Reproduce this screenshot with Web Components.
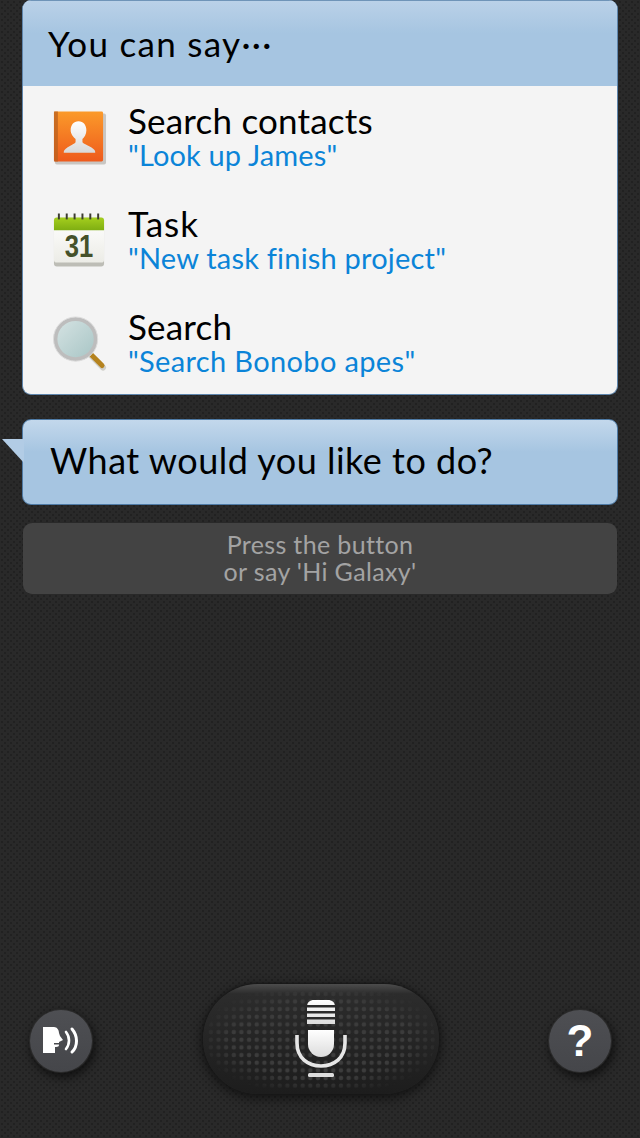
<!DOCTYPE html>
<html>
<head>
<meta charset="utf-8">
<style>
  html, body { margin: 0; padding: 0; }
  body { background: #262626; font-family: Lato, "Noto Sans", sans-serif; }
</style>
</head>
<body>
<voice-screen>
  <say-card heading="You can say···">
    <say-row label="Search contacts" example="&quot;Look up James&quot;" ls="0.2" els="0.15">
      <svg slot="icon" width="56" height="56" viewBox="0 0 56 56" style="margin-top:-4px">
        <defs>
          <linearGradient id="book" x1="0" y1="0" x2="0" y2="1"><stop offset="0" stop-color="#fb9a2a"/><stop offset="1" stop-color="#ee5a1c"/></linearGradient>
          <linearGradient id="person" x1="0" y1="0" x2="0" y2="1"><stop offset="0" stop-color="#fff"/><stop offset="1" stop-color="#d9d9d9"/></linearGradient>
        </defs>
        <rect x="3" y="4" width="52" height="52" rx="2" fill="#c9c6c2"/>
        <rect x="2" y="2" width="50" height="51" rx="1.5" fill="url(#book)"/>
        <rect x="2" y="2" width="4" height="51" fill="#b9601f" opacity=".75"/>
        <path d="M27 12c5 0 8 4 8 9 0 4-2 7-4 9v3c0 2 9 4 12 8 1 1 1 2 1 3H12c0-1 0-2 1-3 3-4 11-6 11-8v-3c-2-2-5-5-5-9 0-5 3-9 8-9z" fill="url(#person)"/>
      </svg>
    </say-row>
    <say-row label="Task" example="&quot;New task finish project&quot;" ls="1" els="0.2">
      <svg slot="icon" width="56" height="60" viewBox="0 0 56 60" style="margin-top:-2px">
        <defs>
          <linearGradient id="leaf" x1="0" y1="0" x2="0" y2="1"><stop offset="0" stop-color="#a5cf1e"/><stop offset="1" stop-color="#7fae12"/></linearGradient>
          <linearGradient id="sheet" x1="0" y1="0" x2="0" y2="1"><stop offset="0" stop-color="#fff"/><stop offset="1" stop-color="#ecece6"/></linearGradient>
        </defs>
        <rect x="2" y="6" width="51" height="50" rx="3" fill="#bdbdb6"/>
        <rect x="2" y="6" width="51" height="46" rx="3" fill="url(#sheet)"/>
        <path d="M2 19V9a3 3 0 0 1 3-3h45a3 3 0 0 1 3 3v10z" fill="url(#leaf)"/>
        <g fill="#3c3c30">
          <rect x="6" y="2" width="2" height="6"/><rect x="14" y="2" width="2" height="6"/><rect x="22" y="2" width="2" height="6"/>
          <rect x="30" y="2" width="2" height="6"/><rect x="38" y="2" width="2" height="6"/><rect x="46" y="2" width="2" height="6"/>
        </g>
        <text x="13" y="46" textLength="29" lengthAdjust="spacingAndGlyphs" font-family="Liberation Sans, sans-serif" font-weight="700" font-size="31" fill="#45512a">31</text>
      </svg>
    </say-row>
    <say-row label="Search" example="&quot;Search Bonobo apes&quot;" ls="0.2" els="0.35">
      <svg slot="icon" width="56" height="56" viewBox="0 0 56 56" style="margin-top:-4px">
        <defs>
          <linearGradient id="glass" x1="0" y1="0" x2="1" y2="1"><stop offset="0" stop-color="#d4e2e2"/><stop offset="1" stop-color="#a9c6c6"/></linearGradient>
        </defs>
        <path d="M40 41l12 12" stroke="#9a9a8c" stroke-width="6" stroke-linecap="round" opacity=".4"/>
        <path d="M40 40l11 11" stroke="#b5831f" stroke-width="5" stroke-linecap="round"/>
        <circle cx="24" cy="24" r="22.5" fill="#bdbdbd"/>
        <circle cx="24" cy="24" r="22.5" fill="none" stroke="#dcdcdc" stroke-width="1"/>
        <circle cx="24" cy="24" r="18.5" fill="url(#glass)"/>
      </svg>
    </say-row>
  </say-card>

  <prompt-bubble>What would you like to do?</prompt-bubble>

  <hint-box>Press the button<br>or say 'Hi Galaxy'</hint-box>

  <control-bar>
    <round-button slot="left">
      <svg width="40" height="34" viewBox="0 0 40 34">
        <path d="M2 3H13c3 0 5 3 5 6l1 3 3 4-4 2v3c0 1-1 2-3 2h-1v6H2z" fill="#fff"/>
        <path d="M13 19h5v1.500h-5z" fill="#4a4b4f"/>
        <path d="M25 8c4 5 4 12 0 17" fill="none" stroke="#fff" stroke-width="2.600" stroke-linecap="round"/>
        <path d="M31 5c6 7 6 17 0 23" fill="none" stroke="#fff" stroke-width="3" stroke-linecap="round"/>
      </svg>
    </round-button>
    <mic-button slot="center"></mic-button>
    <round-button slot="right">
      <span style="font:700 44px 'Liberation Sans',sans-serif;color:#fff;line-height:1">?</span>
    </round-button>
  </control-bar>
</voice-screen>

<script>
/* pantalla completa con el fondo de puntos */
class VoiceScreen extends HTMLElement {
  constructor() {
    super();
    this.attachShadow({ mode: 'open' });
    this.shadowRoot.innerHTML = `
      <style>
        :host {
          display: flex;
          flex-direction: column;
          height: 1138px;
          box-sizing: border-box;
          padding: 0 22px 0;
          overflow: hidden;
          background-color: #292929;
          background-image: radial-gradient(circle at 2px 2px, #212121 1px, transparent 1.6px),
            radial-gradient(circle at 5px 5px, #212121 1px, transparent 1.6px);
          background-size: 6px 6px;
        }
      </style>
      <slot></slot>
    `;
  }
}

/* tarjeta con cabecera azul */
class SayCard extends HTMLElement {
  constructor() {
    super();
    this.attachShadow({ mode: 'open' });
  }
  connectedCallback() {
    this.shadowRoot.innerHTML = `
      <style>
        :host {
          display: block;
          height: 395px;
          box-sizing: border-box;
          border-radius: 9px;
          border: 1px solid #5f86ad;
          border-top: 0;
          overflow: hidden;
          background: #f4f4f4;
        }
        .head {
          height: 86px;
          box-sizing: border-box;
          padding: 0 0 2px 25px;
          display: flex;
          align-items: center;
          font-size: 35px;
          letter-spacing: 1.3px;
          color: #000;
          background: linear-gradient(#bad1e8, #a6c5e1 38%, #a6c5e1);
          border-top: 1px solid #6f94b8;
        }
        .body { padding-top: 1px; }
      </style>
      <div class="head">${this.getAttribute('heading')}</div>
      <div class="body"><slot></slot></div>
    `;
  }
}

/* fila con icono, titulo y ejemplo */
class SayRow extends HTMLElement {
  constructor() {
    super();
    this.attachShadow({ mode: 'open' });
  }
  connectedCallback() {
    const label = this.getAttribute('label');
    const example = this.getAttribute('example');
    this.shadowRoot.innerHTML = `
      <style>
        :host {
          display: flex;
          height: 103px;
          align-items: center;
          padding-left: 29px;
          gap: 21px;
        }
        .icon { width: 55px; display: flex; justify-content: flex-start; }
        .text { display: flex; flex-direction: column; margin-top: -4px; }
        .label { font-size: 35px; line-height: 36px; color: #000; letter-spacing: ${this.getAttribute('ls')}px; }
        .example { font-size: 29px; line-height: 33px; color: #0b84d8; letter-spacing: ${this.getAttribute('els')}px; }
      </style>
      <div class="icon"><slot name="icon"></slot></div>
      <div class="text">
        <div class="label">${label}</div>
        <div class="example">${example.replace(/"/g, '&quot;')}</div>
      </div>
    `;
  }
}

/* burbuja de la pregunta */
class PromptBubble extends HTMLElement {
  constructor() {
    super();
    this.attachShadow({ mode: 'open' });
    this.shadowRoot.innerHTML = `
      <style>
        :host {
          display: flex;
          position: relative;
          align-items: center;
          height: 86px;
          box-sizing: border-box;
          margin-top: 24px;
          padding: 0 0 5px 27px;
          font-size: 36px;
          letter-spacing: 0.5px;
          color: #000;
          border-radius: 9px;
          border: 1px solid #4f7ba6;
          background: linear-gradient(#c3d8ec, #a6c5e1 38%, #a6c5e1);
        }
        svg { position: absolute; left: -21px; top: 18px; }
      </style>
      <svg width="22" height="26" viewBox="0 0 22 26"><path d="M0 1h22v24z" fill="#b2cce5"/></svg>
      <slot></slot>
    `;
  }
}

/* caja gris con la ayuda */
class HintBox extends HTMLElement {
  constructor() {
    super();
    this.attachShadow({ mode: 'open' });
    this.shadowRoot.innerHTML = `
      <style>
        :host {
          display: flex;
          align-items: center;
          justify-content: center;
          height: 71px;
          box-sizing: border-box;
          margin: 18px 1px 0;
          padding-bottom: 2px;
          text-align: center;
          font-size: 25px;
          line-height: 27px;
          letter-spacing: .35px;
          color: #a3a3a3;
          border-radius: 9px;
          background: #434343;
        }
      </style>
      <div><slot></slot></div>
    `;
  }
}

/* barra inferior con los tres botones */
class ControlBar extends HTMLElement {
  constructor() {
    super();
    this.attachShadow({ mode: 'open' });
    this.shadowRoot.innerHTML = `
      <style>
        :host {
          display: grid;
          grid-template-columns: 1fr auto 1fr;
          align-items: center;
          margin: auto -22px 44px;
          padding: 0 29px 0 30px;
        }
        .l, .r { margin-top: 4px; }
        .r { justify-self: end; }
      </style>
      <div class="l"><slot name="left"></slot></div>
      <slot name="center"></slot>
      <div class="r"><slot name="right"></slot></div>
    `;
  }
}

/* boton redondo gris */
class RoundButton extends HTMLElement {
  constructor() {
    super();
    this.attachShadow({ mode: 'open' });
    this.shadowRoot.innerHTML = `
      <style>
        :host {
          display: flex;
          align-items: center;
          justify-content: center;
          width: 62px;
          height: 62px;
          border-radius: 50%;
          background: linear-gradient(#4e4f53, #45464a);
          box-shadow: 0 0 1px 1px #2e2e2e, 2px 4px 8px 2px rgba(0,0,0,.55);
        }
      </style>
      <slot></slot>
    `;
  }
}

/* boton grande del microfono */
class MicButton extends HTMLElement {
  constructor() {
    super();
    this.attachShadow({ mode: 'open' });
    this.shadowRoot.innerHTML = `
      <style>
        :host {
          display: flex;
          position: relative;
          align-items: center;
          justify-content: center;
          width: 236px;
          height: 110px;
          border-radius: 55px;
          background: linear-gradient(#4c4c4c, #2c2c2c 9%, #232323 60%, #1d1d1d);
          box-shadow: 0 0 2px 1px #181818, 0 3px 10px 3px rgba(0,0,0,.4);
        }
        .dots {
          position: absolute;
          inset: 6px 4px;
          border-radius: 50px;
          background-image: radial-gradient(circle at 3.8px 3.8px, #3c3c3c 1.9px, transparent 2.6px);
          background-size: 7.67px 7.67px;
          -webkit-mask-image: radial-gradient(ellipse 55% 58% at center, #000 70%, transparent 100%);
          mask-image: radial-gradient(ellipse 55% 58% at center, #000 70%, transparent 100%);
        }
        svg { position: relative; }
      </style>
      <div class="dots"></div>
      <svg width="54" height="80" viewBox="0 0 54 80">
        <defs><linearGradient id="m" x1="0" y1="0" x2="0" y2="1"><stop offset="0" stop-color="#fff"/><stop offset="1" stop-color="#dcdcdc"/></linearGradient></defs>
        <path d="M13 25V8c0-5 3-7 7-7h14c4 0 7 2 7 7v17z" fill="url(#m)"/>
        <rect x="13" y="6" width="28" height="2.500" fill="#2b2b2b"/>
        <rect x="13" y="12" width="28" height="2.500" fill="#2b2b2b"/>
        <rect x="13" y="18" width="28" height="2.500" fill="#2b2b2b"/>
        <path d="M14 31h26v14a13 13 0 0 1-26 0z" fill="url(#m)"/>
        <path d="M3 36v8c0 15 11 23 24 23s24-8 24-23v-8" fill="none" stroke="#e6e6e6" stroke-width="3.600"/>
        <rect x="14" y="74" width="26" height="4" rx="1.500" fill="#ddd"/>
      </svg>
    `;
  }
}

customElements.define('voice-screen', VoiceScreen);
customElements.define('say-card', SayCard);
customElements.define('say-row', SayRow);
customElements.define('prompt-bubble', PromptBubble);
customElements.define('hint-box', HintBox);
customElements.define('control-bar', ControlBar);
customElements.define('round-button', RoundButton);
customElements.define('mic-button', MicButton);
</script>
</body>
</html>
